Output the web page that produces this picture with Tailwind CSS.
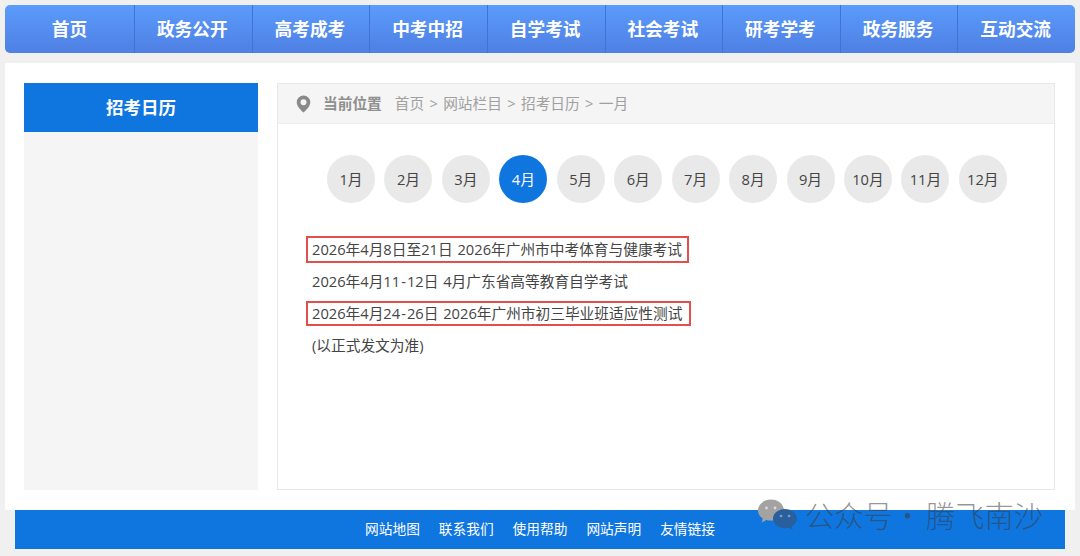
<!DOCTYPE html>
<html lang="zh-CN">
<head>
<meta charset="utf-8">
<script src="https://cdn.jsdelivr.net/npm/@tailwindcss/browser@4"></script>
</head>
<body class="relative w-[1080px] h-[556px] overflow-hidden bg-[#f0f0f0] font-['Open_Sans','Noto_Sans_CJK_SC',sans-serif] text-[#444]">
  <div class="pt-[5px] px-[5px]">
    <nav class="grid grid-cols-[129px_repeat(8,1fr)] h-[48px] rounded-[5px] bg-gradient-to-b from-[#5a9cfb] to-[#4f7fe3] text-white text-[17.7px] font-bold">
      <a class="flex items-center justify-center">首页</a>
      <a class="flex items-center justify-center border-l border-[#3f74d3] pr-[2px]">政务公开</a>
      <a class="flex items-center justify-center border-l border-[#3f74d3] pr-[2px]">高考成考</a>
      <a class="flex items-center justify-center border-l border-[#3f74d3] pr-[2px]">中考中招</a>
      <a class="flex items-center justify-center border-l border-[#3f74d3] pr-[2px]">自学考试</a>
      <a class="flex items-center justify-center border-l border-[#3f74d3] pr-[2px]">社会考试</a>
      <a class="flex items-center justify-center border-l border-[#3f74d3] pr-[2px]">研考学考</a>
      <a class="flex items-center justify-center border-l border-[#3f74d3] pr-[2px]">政务服务</a>
      <a class="flex items-center justify-center border-l border-[#3f74d3] pr-[2px]">互动交流</a>
    </nav>
    <main class="mt-[10px] h-[447px] bg-white pt-[20px] pl-[19px] pr-[20px] flex gap-[19px]">
      <aside class="w-[234px] h-[407px] bg-[#f5f5f5]">
        <h2 class="h-[49px] flex items-center justify-center bg-[#0f76e0] text-white text-[17.5px] font-bold">招考日历</h2>
      </aside>
      <section class="w-[778px] h-[407px] border border-[#e8e8e8]">
        <div class="h-[40px] bg-[#f5f5f5] border-b border-[#eeeeee] flex items-center pl-[18px] text-[14.7px] text-[#a0a0a0]">
          <svg class="w-[15px] h-[18px] mr-[12px]" viewBox="0 0 15 18"><path fill="#8a8a8a" fill-rule="evenodd" d="M7.5 0.5a6.8 6.8 0 0 1 6.8 6.8c0 3.6-3.6 7.7-6.8 10.2C4.300 15 .7 10.900.7 7.300A6.800 6.800 0 0 1 7.500.5zm0 3.800a3 3 0 1 0 0 6 3 3 0 0 0 0-6z"/></svg>
          <span class="font-bold text-[#8f8f8f] mr-[13px]">当前位置</span>
          <span class="[word-spacing:1.5px]">首页 &gt; 网站栏目 &gt; 招考日历 &gt; 一月</span>
        </div>
        <div class="mt-[31px] pl-[49px] flex gap-[9.45px] text-[14.7px]">
          <span class="w-[48px] h-[48px] rounded-full bg-[#e9e9e9] flex items-center justify-center">1月</span>
          <span class="w-[48px] h-[48px] rounded-full bg-[#e9e9e9] flex items-center justify-center">2月</span>
          <span class="w-[48px] h-[48px] rounded-full bg-[#e9e9e9] flex items-center justify-center">3月</span>
          <span class="w-[48px] h-[48px] rounded-full bg-[#0f76e0] text-white flex items-center justify-center">4月</span>
          <span class="w-[48px] h-[48px] rounded-full bg-[#e9e9e9] flex items-center justify-center">5月</span>
          <span class="w-[48px] h-[48px] rounded-full bg-[#e9e9e9] flex items-center justify-center">6月</span>
          <span class="w-[48px] h-[48px] rounded-full bg-[#e9e9e9] flex items-center justify-center">7月</span>
          <span class="w-[48px] h-[48px] rounded-full bg-[#e9e9e9] flex items-center justify-center">8月</span>
          <span class="w-[48px] h-[48px] rounded-full bg-[#e9e9e9] flex items-center justify-center">9月</span>
          <span class="w-[48px] h-[48px] rounded-full bg-[#e9e9e9] flex items-center justify-center">10月</span>
          <span class="w-[48px] h-[48px] rounded-full bg-[#e9e9e9] flex items-center justify-center">11月</span>
          <span class="w-[48px] h-[48px] rounded-full bg-[#e9e9e9] flex items-center justify-center">12月</span>
        </div>
        <ul class="mt-[30px] pl-[34px] text-[14.7px] text-[#444] [word-spacing:1px]">
          <li class="h-[32px] flex items-center"><span class="h-[23px] leading-[23px] -ml-[4px] pl-[4px] pr-[5px] outline-2 outline-[#e2504c]">2026年4月8日至21日 2026年广州市中考体育与健康考试</span></li>
          <li class="h-[32px] flex items-center"><span>2026年4月11<span class="mx-px">-</span>12日 4月广东省高等教育自学考试</span></li>
          <li class="h-[32px] flex items-center"><span class="h-[21px] leading-[21px] -ml-[4px] pl-[4px] pr-[7px] outline-2 outline-[#e2504c]">2026年4月24<span class="mx-px">-</span>26日 2026年广州市初三毕业班适应性测试</span></li>
          <li class="h-[32px] flex items-center">(以正式发文为准)</li>
        </ul>
      </section>
    </main>
  </div>
  <footer class="mx-[15px] h-[39px] bg-[#0f76e0] text-white text-[13.7px] flex items-center justify-center gap-[19px]">
    <a>网站地图</a><a>联系我们</a><a>使用帮助</a><a>网站声明</a><a>友情链接</a>
  </footer>
  <div class="absolute left-[757px] top-[496px] flex items-center text-[29.3px] leading-[36px] font-light text-[#3a3a3a]/55 whitespace-nowrap font-['Noto_Sans_CJK_SC',sans-serif]">
    <svg class="w-[41px] h-[33px]" viewBox="0 0 41 33">
      <path fill="#a3a3a3" d="M14 .5C6.800.5 1 5.400 1 11.500c0 3.300 1.900 6.200 4.800 8.100l-1 3.900 4.400-2.500c1.500.4 3.100.6 4.800.6 6 0 13-4 13-10.100C27 5.400 21.200.5 14 .5z"/>
      <path fill="#2a5f9e" d="M28 10c-6.600 0-12 4.300-12 9.600s5.400 9.600 12 9.600c1.400 0 2.800-.2 4-.6l3.600 2.400-.8-3.600c3-1.800 5.200-4.600 5.200-7.800C40 14.300 34.600 10 28 10z"/>
      <circle cx="9.500" cy="9" r="1.400" fill="#fff" opacity=".6"/><circle cx="18" cy="9" r="1.400" fill="#fff" opacity=".6"/>
      <circle cx="24" cy="17" r="1.300" fill="#fff" opacity=".4"/><circle cx="32" cy="17" r="1.300" fill="#fff" opacity=".4"/>
    </svg>
    <div class="flex mb-[3px]">
      <span class="ml-[7px]">公众号</span><span class="w-[29px] text-center">·</span><span class="ml-[4px]">腾飞南沙</span>
    </div>
  </div>
</body>
</html>
